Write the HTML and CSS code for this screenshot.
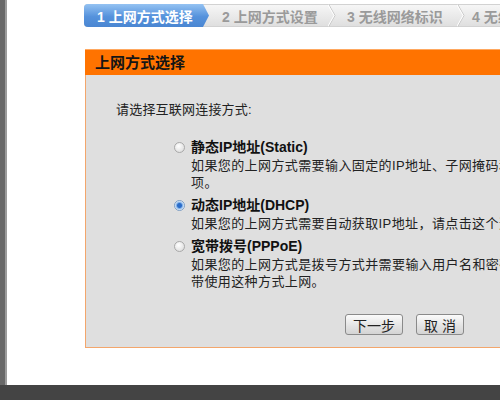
FILE: index.html
```html
<!DOCTYPE html>
<html lang="zh-CN">
<head>
  <meta charset="UTF-8">
  <title>设置向导</title>
  <link rel="stylesheet" href="styles.css">
</head>
<body>
  <div class="screen">
    <div class="side"></div>
    <div class="main">
      <div class="steps">
        <div class="step step-active">1 上网方式选择</div>
        <div class="step step-2">2 上网方式设置
          <svg class="chev" width="8" height="23" viewBox="0 0 8 23"><polyline points="0.5,0 7,11.5 0.5,23" fill="none" stroke="#c8c8c8" stroke-width="1"/><polyline points="-0.5,0 6,11.5 -0.5,23" fill="none" stroke="#ffffff" stroke-width="1"/></svg>
        </div>
        <div class="step step-3">3 无线网络标识
          <svg class="chev" width="8" height="23" viewBox="0 0 8 23"><polyline points="0.5,0 7,11.5 0.5,23" fill="none" stroke="#c8c8c8" stroke-width="1"/><polyline points="-0.5,0 6,11.5 -0.5,23" fill="none" stroke="#ffffff" stroke-width="1"/></svg>
        </div>
        <div class="step step-4">4 无线安全设置</div>
      </div>

      <div class="panel">
        <div class="panel-head">上网方式选择</div>
        <div class="panel-body">
          <p class="intro">请选择互联网连接方式:</p>
          <div class="options">
            <label class="option">
              <input type="radio" name="wan" class="radio">
              <span class="option-text">
                <span class="option-title">静态IP地址(Static)</span>
                <span class="option-desc">如果您的上网方式需要输入固定的IP地址、子网掩码和网关地址，请点击这个选<br>项。</span>
              </span>
            </label>
            <label class="option">
              <input type="radio" name="wan" class="radio" checked>
              <span class="option-text">
                <span class="option-title">动态IP地址(DHCP)</span>
                <span class="option-desc">如果您的上网方式需要自动获取IP地址，请点击这个选项。</span>
              </span>
            </label>
            <label class="option">
              <input type="radio" name="wan" class="radio">
              <span class="option-text">
                <span class="option-title">宽带拨号(PPPoE)</span>
                <span class="option-desc">如果您的上网方式是拨号方式并需要输入用户名和密码，如ADSL宽<br>带使用这种方式上网。</span>
              </span>
            </label>
          </div>
          <div class="actions">
            <button class="btn btn-next">下一步</button>
            <button class="btn btn-cancel">取 消</button>
          </div>
        </div>
      </div>
    </div>
  </div>
  <div class="bottom"></div>
</body>
</html>
```

FILE: styles.css
```css
body {
    margin: 0;
    height: 400px;
    overflow: hidden;
    background: #ffffff;
    font-family: "Liberation Sans", "Noto Sans CJK SC", sans-serif;
    font-size: 13px;
    color: #222;
}
.screen {
    display: flex;
    height: 385px;
    overflow: hidden;
}
.side {
    flex: none;
    width: 5px;
    background: #686868;
    border-right: 2px solid #9c9c9c;
}
.main {
    flex: 1;
    min-width: 0;
    padding: 4px 0 0 77px;
}
.bottom {
    height: 15px;
    background: #444444;
}

/* wizard steps */
.steps {
    display: flex;
    width: 640px;
    height: 23px;
    background: linear-gradient(#f7f7f7, #dedede);
    box-shadow: inset 0 0 0 1px #d2d2d2;
    border-radius: 4px 0 0 4px;
}
.step {
    flex: none;
    display: flex;
    align-items: center;
    box-sizing: border-box;
    height: 23px;
    font-size: 14px;
    font-weight: bold;
    color: #9a9a9a;
    white-space: nowrap;
}
.step-active {
    width: 125px;
    padding-left: 13px;
    color: #ffffff;
    background: linear-gradient(#94c2f2, #5592dc 55%, #4a86d2);
    border-radius: 4px 0 0 4px;
    clip-path: polygon(0 0, 119px 0, 125px 50%, 119px 100%, 0 100%);
}
.step-2 {
    width: 127px;
    padding-left: 13px;
}
.step-3 {
    width: 129px;
    padding-left: 11px;
}
.step-4 {
    padding-left: 7px;
}
.chev {
    margin-left: auto;
    flex: none;
}

/* panel */
.panel {
    width: 620px;
    margin: 22px 0 0 1px;
}
.panel-head {
    height: 26px;
    line-height: 26px;
    padding-left: 10px;
    background: #ff7300;
    border-top: 1px solid #ffa860;
    box-sizing: border-box;
    font-size: 15px;
    font-weight: bold;
    color: #151515;
}
.panel-body {
    box-sizing: border-box;
    height: 273px;
    padding: 26px 0 0 30px;
    background: #dfdfdf;
    border: 1px solid #f3a66c;
    border-top: none;
}
.intro {
    margin: 0;
    line-height: 17px;
    letter-spacing: 0.2px;
}
.options {
    display: flex;
    flex-direction: column;
    gap: 4px;
    margin-top: 19px;
    padding-left: 58px;
}
.option {
    display: flex;
    gap: 6px;
}
.radio {
    appearance: none;
    flex: none;
    width: 11px;
    height: 11px;
    margin: 5px 0 0 0;
    border: 1px solid #a9a9a9;
    border-radius: 50%;
    box-sizing: border-box;
    background: radial-gradient(circle at 40% 35%, #ffffff, #d6d6d6);
}
.radio:checked {
    border-color: #7d9ec4;
    background: radial-gradient(circle, #2b6cc8 0 2px, #7fb0e8 3px, #e6f0fb 4.5px);
}
.option-text {
    display: flex;
    flex-direction: column;
}
.option-title {
    line-height: 20px;
    font-size: 14px;
    font-weight: bold;
    color: #111;
}
.option-desc {
    line-height: 17px;
    letter-spacing: 0.4px;
    white-space: nowrap;
}
.actions {
    display: flex;
    gap: 13px;
    margin-top: 24px;
    padding-left: 229px;
}
.btn {
    height: 21px;
    padding: 0;
    font-family: "Liberation Sans", "Noto Sans CJK SC", sans-serif;
    font-size: 14px;
    color: #222;
    background: linear-gradient(#fbfbfb, #e2e2e2 60%, #d4d4d4);
    border: 1px solid #8a8a8a;
    border-radius: 3px;
}
.btn-next {
    width: 58px;
}
.btn-cancel {
    width: 48px;
}
```
